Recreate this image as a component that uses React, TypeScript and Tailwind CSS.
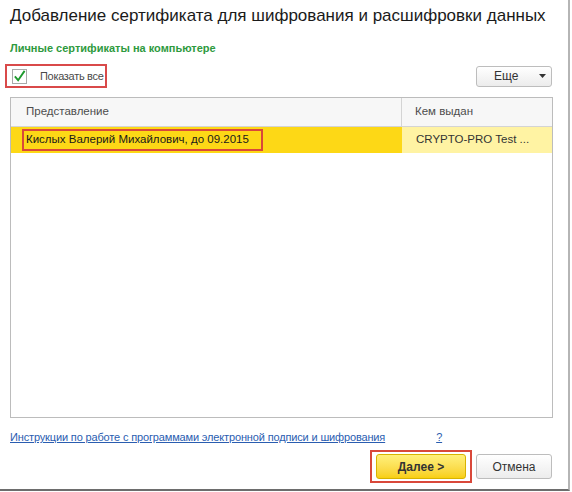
import React from 'react';

const CheckMark = () => (
  <svg width="14" height="14" viewBox="0 0 14 14">
    <path d="M2 7.5 L5.5 11.5 L12.5 1.5" fill="none" stroke="#1e9a2e" strokeWidth="2" />
  </svg>
);

const App = () => {
  return (
    <div className="w-[572px] h-[492px] bg-white" style={{ fontFamily: '"Liberation Sans", Arial, sans-serif' }}>
      <div className="w-[570px] h-[491px] border-r-2 border-b-2 border-r-[#b5b5b5] border-b-[#6d6d6d] flex flex-col">
        <div className="pl-[10px] pt-[4px] text-[17px] leading-[24px] text-[#1a1a1a] whitespace-nowrap">
          Добавление сертификата для шифрования и расшифровки данных
        </div>
        <div className="pl-[10px] mt-[13px] text-[11px] leading-[14px] font-bold text-[#2e9a3e]">
          Личные сертификаты на компьютере
        </div>
        <div className="flex items-center justify-between mt-[9px] pr-[16px] h-[24px]">
          <div className="ml-[5px] w-[102px] h-[24px] border-2 border-[#d94a4a] flex items-center">
            <div className="ml-[5px] w-[15px] h-[15px] border border-[#a9a9a9] bg-white flex items-center justify-center">
              <CheckMark />
            </div>
            <span className="ml-[13px] text-[11px] tracking-[-0.3px] text-[#4a4a4a] whitespace-nowrap">Показать все</span>
          </div>
          <div className="w-[76px] h-[21px] rounded-[3px] border border-[#bdbdbd] bg-gradient-to-b from-white to-[#ececec] flex items-center text-[12px] text-[#333]">
            <span className="ml-[17px]">Еще</span>
            <svg className="ml-[21px]" width="7" height="4" viewBox="0 0 7 4">
              <path d="M0 0 H7 L3.5 4 Z" fill="#333" />
            </svg>
          </div>
        </div>
        <div className="ml-[10px] mt-[9px] w-[543px] h-[321px] border border-[#bcbcbc] flex flex-col">
          <div className="flex h-[29px] border-b border-[#d4d4d4] bg-[#f7f7f7] text-[11.5px] text-[#4d4d4d]">
            <div className="w-[391px] pl-[15px] flex items-center border-r border-[#d4d4d4]">Представление</div>
            <div className="flex-1 pl-[13px] flex items-center">Кем выдан</div>
          </div>
          <div className="flex h-[26px] text-[11.5px] text-[#1a1a1a]">
            <div className="w-[391px] bg-[#fdd816] flex items-center pl-[11px]">
              <div className="h-[22px] w-[241px] border-2 border-[#d9483a] flex items-center pl-[2px] whitespace-nowrap">
                Кислых Валерий Михайлович, до 09.2015
              </div>
            </div>
            <div className="flex-1 bg-[#fff3a3] pl-[14px] flex items-center text-[#333]">CRYPTO-PRO Test ...</div>
          </div>
        </div>
        <div className="pl-[10px] mt-[11px] flex items-center text-[11px] tracking-[-0.15px] leading-[16px] whitespace-nowrap">
          <span className="text-[#2a5db0] underline">Инструкции по работе с программами электронной подписи и шифрования</span>
          <span className="ml-[51px] text-[#2a5db0] underline">?</span>
        </div>
        <div className="flex justify-end items-center mt-[5px] pr-[16px]">
          <div className="w-[102px] h-[33px] border-2 border-[#d9483a] flex items-center justify-center">
            <div className="w-[90px] h-[25px] rounded-[3px] border border-[#d8b300] bg-gradient-to-b from-[#fff07a] to-[#f8cf0c] flex items-center justify-center text-[12px] font-bold text-[#333]">
              Далее &gt;
            </div>
          </div>
          <div className="ml-[4px] w-[76px] h-[25px] rounded-[3px] border border-[#bdbdbd] bg-gradient-to-b from-white to-[#ececec] flex items-center justify-center text-[12px] text-[#333]">
            Отмена
          </div>
        </div>
      </div>
    </div>
  );
};

export default App;
